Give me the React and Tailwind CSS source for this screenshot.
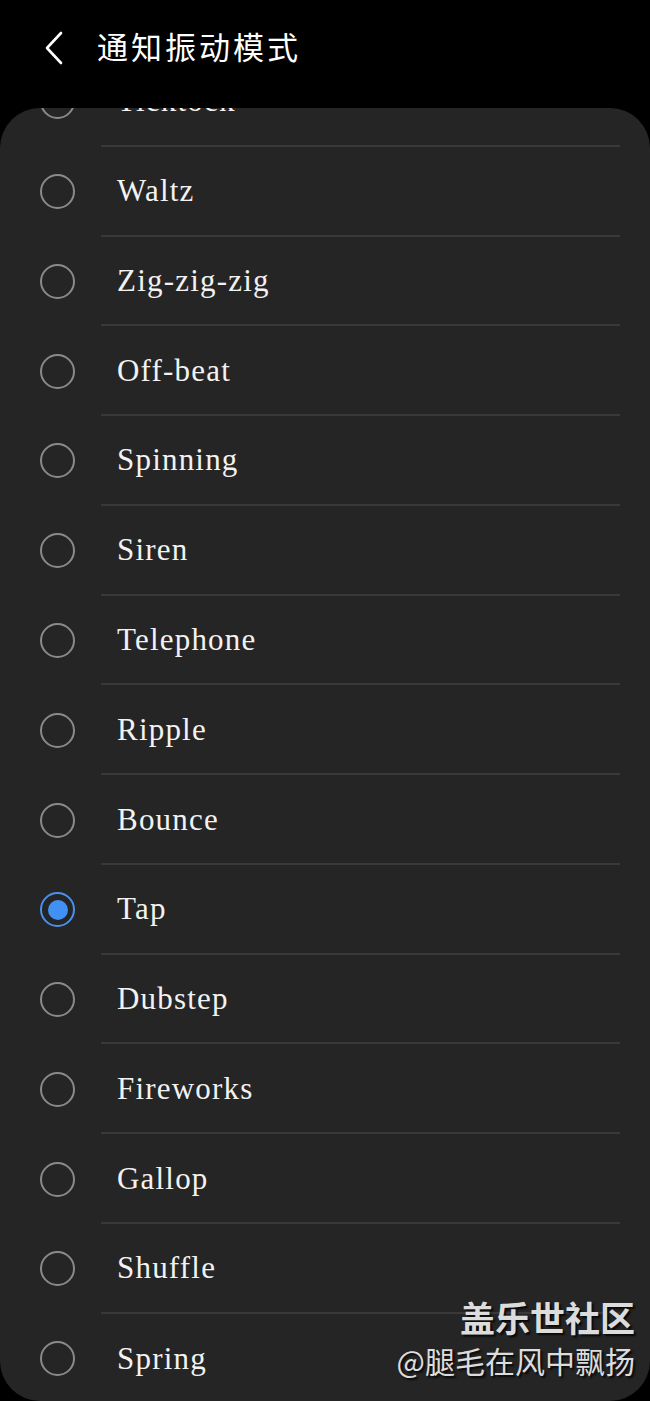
import React from 'react';

const patterns = [
  'Ticktock',
  'Waltz',
  'Zig-zig-zig',
  'Off-beat',
  'Spinning',
  'Siren',
  'Telephone',
  'Ripple',
  'Bounce',
  'Tap',
  'Dubstep',
  'Fireworks',
  'Gallop',
  'Shuffle',
  'Spring',
];

const serif = { fontFamily: '"Liberation Serif", "DejaVu Serif", serif' };

const Radio = ({ checked }) =>
  checked ? (
    <div className="w-[35px] h-[35px] rounded-full border-2 border-[#4a90ee] flex items-center justify-center shrink-0">
      <div className="w-[20px] h-[20px] rounded-full bg-[#4191f5]" />
    </div>
  ) : (
    <div className="w-[35px] h-[35px] rounded-full border-2 border-[#8a8a8a] shrink-0" />
  );

const Row = ({ label, checked, last }) => (
  <div className="flex h-[89.77px]">
    <div className="w-[101px] flex items-center pl-[40px] shrink-0">
      <Radio checked={checked} />
    </div>
    <div
      className={`flex-1 mr-[30px] flex items-center pl-[16px] ${last ? '' : 'border-b-2 border-[#393939]'}`}
    >
      <span className="text-[31px] tracking-[1.2px] text-[#f2f2f2] leading-none" style={serif}>
        {label}
      </span>
    </div>
  </div>
);

export default function App() {
  return (
    <div className="w-[650px] h-[1401px] bg-black overflow-hidden relative">
      {/* Header */}
      <div className="h-[108px] flex items-start pt-[26px]">
        <div className="w-[97px] flex justify-center pl-[10px] pt-[5px]">
          <svg width="24" height="34" viewBox="0 0 24 34" fill="none">
            <polyline
              points="19,2 5,17 19,32"
              stroke="#ffffff"
              strokeWidth="2.6"
              strokeLinecap="round"
              strokeLinejoin="round"
            />
          </svg>
        </div>
        <h1
          className="text-[31px] tracking-[3px] text-white leading-[40px]"
          style={{ fontFamily: '"Noto Sans CJK SC", sans-serif' }}
        >
          通知振动模式
        </h1>
      </div>

      {/* List card */}
      <div className="h-[1293px] bg-[#252525] rounded-[40px] overflow-hidden">
        <div className="-mt-[51px]">
          {patterns.map((p, i) => (
            <Row key={p} label={p} checked={p === 'Tap'} last={i === patterns.length - 1} />
          ))}
        </div>
      </div>

      {/* Watermark */}
      <div
        className="absolute right-[15px] bottom-[20px] flex flex-col items-end text-[#dcdcdc]"
        style={{ fontFamily: '"Noto Sans CJK SC", sans-serif', textShadow: '2px 2px 2px rgba(0,0,0,0.8)' }}
      >
        <span className="text-[35px] font-bold leading-[44px]">盖乐世社区</span>
        <span className="text-[30px] leading-[42px]">@腿毛在风中飘扬</span>
      </div>
    </div>
  );
}
